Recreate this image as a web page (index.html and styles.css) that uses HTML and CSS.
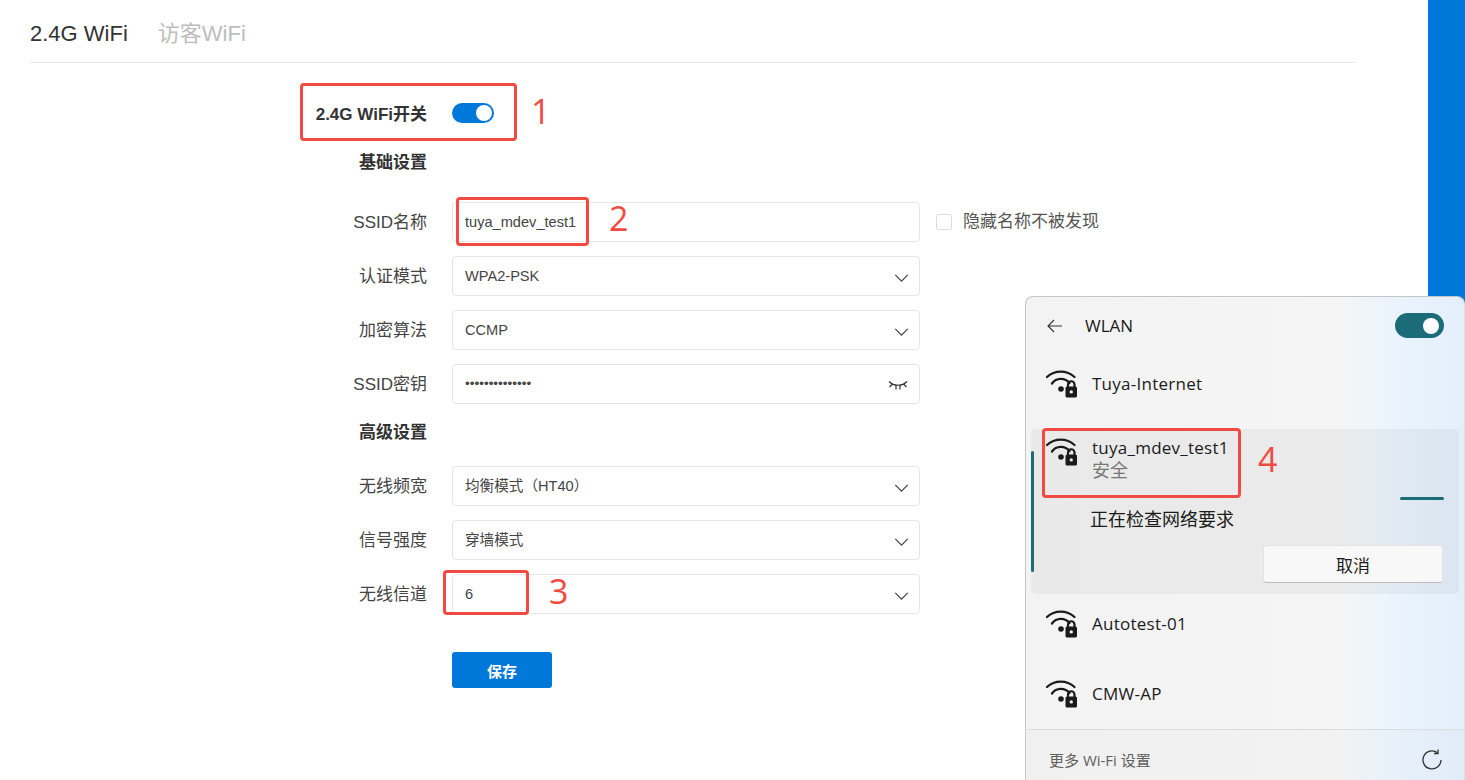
FILE: index.html
```html
<!DOCTYPE html>
<html lang="zh-CN">
<head>
<meta charset="utf-8">
<title>2.4G WiFi</title>
<link rel="stylesheet" href="styles.css">
</head>
<body>
<svg class="defs" width="0" height="0" aria-hidden="true">
  <symbol id="wifi" viewBox="0 0 34 30">
    <path d="M2 8A20.500 20.500 0 0 1 29.500 8" fill="none" stroke="#1a1a1a" stroke-width="2.300" stroke-linecap="round"/>
    <path d="M7 14.500A11 11 0 0 1 24.500 14" fill="none" stroke="#1a1a1a" stroke-width="2.300" stroke-linecap="round"/>
    <circle cx="16" cy="20" r="2.800" fill="#1a1a1a"/>
    <path d="M23 18v-2.500a3.250 3.250 0 0 1 6.500 0V18" fill="none" stroke="#1a1a1a" stroke-width="2.200"/>
    <path fill-rule="evenodd" d="M22 17.500h8.500a1.500 1.500 0 0 1 1.500 1.500v8a1.500 1.500 0 0 1-1.500 1.500H22a1.500 1.500 0 0 1-1.500-1.500V19a1.500 1.500 0 0 1 1.500-1.500zM26.250 21.200a1.700 1.700 0 1 0 0 3.400a1.700 1.700 0 0 0 0-3.400z" fill="#1a1a1a"/>
  </symbol>
  <symbol id="chev" viewBox="0 0 16 9">
    <path d="M1 1l7 7 7-7" fill="none" stroke="#444" stroke-width="1.400"/>
  </symbol>
</svg>

<main class="page">
  <header class="tabs">
    <span class="tab tab-active">2.4G WiFi</span>
    <span class="tab">访客WiFi</span>
  </header>
  <section class="form">
    <div class="row">
      <span class="label label-strong label-switch">2.4G WiFi开关</span>
      <span class="switch"><i class="knob"></i></span>
    </div>
    <div class="row row-head row-head-first"><span class="label label-strong">基础设置</span></div>
    <div class="row">
      <span class="label">SSID名称</span>
      <div class="field">tuya_mdev_test1</div>
      <span class="check"></span>
      <span class="check-text">隐藏名称不被发现</span>
    </div>
    <div class="row">
      <span class="label">认证模式</span>
      <div class="field">WPA2-PSK<svg class="chev"><use href="#chev"/></svg></div>
    </div>
    <div class="row">
      <span class="label">加密算法</span>
      <div class="field">CCMP<svg class="chev"><use href="#chev"/></svg></div>
    </div>
    <div class="row">
      <span class="label">SSID密钥</span>
      <div class="field field-pass">••••••••••••••
        <svg class="eye" viewBox="0 0 20 10"><path d="M1 1.500c5 5 13 5 18 0M4.500 4L1.500 7M8 5.500V9.500M12 5.500V9.500M15.500 4L18.500 7" fill="none" stroke="#333" stroke-width="1.200"/></svg>
      </div>
    </div>
    <div class="row row-head row-head-second"><span class="label label-strong">高级设置</span></div>
    <div class="row">
      <span class="label">无线频宽</span>
      <div class="field">均衡模式（HT40）<svg class="chev"><use href="#chev"/></svg></div>
    </div>
    <div class="row">
      <span class="label">信号强度</span>
      <div class="field">穿墙模式<svg class="chev"><use href="#chev"/></svg></div>
    </div>
    <div class="row">
      <span class="label">无线信道</span>
      <div class="field">6<svg class="chev"><use href="#chev"/></svg></div>
    </div>
    <div class="row row-actions">
      <span class="label"></span>
      <button class="save" type="button">保存</button>
    </div>
  </section>
</main>
<aside class="edge"></aside>

<div class="note box1"></div>
<div class="note box2"></div>
<div class="note box3"></div>
<div class="note box4"></div>
<span class="num num1">1</span>
<span class="num num2">2</span>
<span class="num num3">3</span>
<span class="num num4">4</span>

<section class="panel">
  <div class="panel-head">
    <svg class="back" viewBox="0 0 16 14"><path d="M15 7H1.500M7 1L1 7l6 6" fill="none" stroke="#333" stroke-width="1.100"/></svg>
    <span class="panel-title">WLAN</span>
    <span class="win-switch"><i class="win-knob"></i></span>
  </div>
  <div class="net net-first">
    <svg class="wifi"><use href="#wifi"/></svg><span class="net-name">Tuya-Internet</span>
  </div>
  <div class="net-open">
    <i class="scroll"></i>
    <div class="net-open-top">
      <svg class="wifi"><use href="#wifi"/></svg>
      <div class="net-text">
        <div class="net-name">tuya_mdev_test1</div>
        <div class="net-sub">安全</div>
      </div>
    </div>
    <i class="progress"></i>
    <div class="net-status">正在检查网络要求</div>
    <button class="cancel" type="button">取消</button>
  </div>
  <div class="net net-third">
    <svg class="wifi"><use href="#wifi"/></svg><span class="net-name">Autotest-01</span>
  </div>
  <div class="net net-fourth">
    <svg class="wifi"><use href="#wifi"/></svg><span class="net-name">CMW-AP</span>
  </div>
  <div class="panel-foot">
    <span class="more">更多 Wi-Fi 设置</span>
    <svg class="refresh" viewBox="0 0 22 22"><path d="M16.500 3.800A9 9 0 1 0 20 11" fill="none" stroke="#333" stroke-width="1.300"/><path d="M17 0.500V4.500H13" fill="none" stroke="#333" stroke-width="1.300"/></svg>
  </div>
</section>
</body>
</html>
```
FILE: styles.css
```css
html, body { margin: 0; height: 100%; }
body {
  display: flex;
  height: 780px;
  overflow: hidden;
  background: #fff;
  font-family: "Liberation Sans", "Noto Sans CJK SC", sans-serif;
  color: #333;
}
.defs { position: absolute; }
.page { width: 1325px; padding: 0 73px 0 30px; flex: none; }
.edge { flex: 1; background: #0078d9; }

.tabs {
  display: flex;
  gap: 30px;
  height: 62px;
  align-items: center;
  padding-top: 5px;
  box-sizing: border-box;
  box-shadow: 0 1px 0 #e6e6e6;
}
.tab { font-size: 22px; color: #bdbdbd; line-height: 1; }
.tab-active { color: #333; }

.form { display: flex; flex-direction: column; gap: 14px; padding-top: 31px; }
.row { display: flex; align-items: center; height: 40px; }
.row-head { height: 30px; }
.row-head-first { margin-bottom: 11px; }
.row-head-second { margin-top: -1px; margin-bottom: 5px; }
.row-actions { margin-top: 24px; height: 36px; }
.label {
  width: 397px;
  margin-right: 25px;
  margin-bottom: 4px;
  flex: none;
  text-align: right;
  font-size: 17px;
  color: #444;
}
.label-strong { font-weight: 700; color: #333; }
.label-switch { margin-bottom: 2px; }

.switch {
  width: 42px;
  height: 20px;
  border-radius: 10px;
  background: #0078d9;
  display: flex;
  align-items: center;
  justify-content: flex-end;
  padding-right: 2px;
  box-sizing: border-box;
}
.knob { width: 16px; height: 16px; border-radius: 50%; background: #fff; }

.field {
  position: relative;
  width: 468px;
  height: 40px;
  flex: none;
  box-sizing: border-box;
  border: 1px solid #e6e6e6;
  border-radius: 4px;
  padding: 0 12px;
  line-height: 38px;
  font-size: 14.600px;
  color: #444;
}
.field-pass { font-size: 13.500px; }
.chev { position: absolute; right: 10px; top: 17px; width: 15px; height: 8px; }
.eye { position: absolute; right: 11px; top: 15px; width: 20px; height: 10px; }

.check {
  width: 16px;
  height: 16px;
  margin-left: 16px;
  box-sizing: border-box;
  border: 1px solid #dcdcdc;
  border-radius: 2px;
  flex: none;
}
.check-text { margin: 0 0 6px 11px; font-size: 17px; color: #555; white-space: nowrap; }

.save {
  width: 100px;
  height: 36px;
  border: 0;
  border-radius: 3px;
  background: #0078d9;
  color: #fff;
  font: 700 15px "Liberation Sans", "Noto Sans CJK SC", sans-serif;
}

.note {
  position: absolute;
  z-index: 3;
  box-sizing: border-box;
  border: 3px solid #f04b42;
  border-radius: 4px;
}
.box1 { left: 300px; top: 83px; width: 217px; height: 58px; }
.box2 { left: 456px; top: 197px; width: 133px; height: 49px; }
.box3 { left: 443px; top: 570px; width: 86px; height: 45px; }
.box4 { left: 1042px; top: 428px; width: 199px; height: 70px; }
.num {
  position: absolute;
  z-index: 3;
  font: 34px/40px "Open Sans", sans-serif;
  color: #f04b42;
}
.num1 { left: 531px; top: 91px; }
.num2 { left: 609px; top: 198px; }
.num3 { left: 549px; top: 571px; }
.num4 { left: 1258px; top: 439px; }

.panel {
  position: absolute;
  z-index: 2;
  left: 1025px;
  top: 296px;
  width: 440px;
  height: 484px;
  box-sizing: border-box;
  padding-left: 1px;
  border: 1px solid #c6c6c6;
  border-bottom: 0;
  border-right-color: #d5e0ea;
  border-top-right-radius: 8px;
  border-top-left-radius: 8px;
  overflow: hidden;
  display: flex;
  flex-direction: column;
  background: linear-gradient(90deg, #f3f3f3 0, #f5f5f5 72%, #ebf4fd 83%, #e3effb 100%);
  font-family: "Open Sans", "Noto Sans CJK SC", sans-serif;
  color: #1b1b1b;
}
.panel-head {
  display: flex;
  align-items: center;
  height: 57px;
  flex: none;
  padding: 0 20px 0 20px;
}
.back { width: 16px; height: 14px; }
.panel-title { margin-left: 22px; font-size: 17px; flex: 1; }
.win-switch {
  width: 49px;
  height: 25px;
  border-radius: 13px;
  background: #1c6b78;
  display: flex;
  align-items: center;
  justify-content: flex-end;
  padding-right: 5px;
  box-sizing: border-box;
}
.win-knob { width: 16px; height: 16px; border-radius: 50%; background: #fff; }

.net { display: flex; align-items: center; padding-left: 18px; flex: none; box-sizing: border-box; }
.net-first { height: 75px; padding-bottom: 16px; }
.net-third { height: 70px; padding-bottom: 10px; }
.net-fourth { height: 65px; padding-bottom: 5px; }
.wifi { width: 34px; height: 30px; flex: none; }
.net-name { margin-left: 13px; font-size: 17px; line-height: 22px; letter-spacing: .25px; }

.net-open {
  position: relative;
  height: 165px;
  margin: 0 5px 0 4px;
  flex: none;
  box-sizing: border-box;
  padding-top: 8px;
  border-radius: 5px;
  background: rgba(0, 0, 0, .04);
}
.net-open .wifi { margin-left: 14px; }
.net-open-top { display: flex; height: 50px; }
.net-sub { margin-left: 13px; font-size: 18px; line-height: 22px; color: #777; }
.scroll {
  position: absolute;
  left: 0;
  top: 22px;
  width: 3px;
  height: 121px;
  border-radius: 2px;
  background: #1c6b78;
}
.progress {
  display: block;
  width: 44px;
  height: 3px;
  margin: 10px 0 0 369px;
  border-radius: 2px;
  background: #1c6b78;
}
.net-status { margin: 7px 0 0 59px; font-size: 18px; line-height: 24px; }
.cancel {
  display: block;
  width: 180px;
  height: 38px;
  margin: 14px 0 0 232px;
  border: 1px solid #e2e2e2;
  border-bottom-color: #bdbdbd;
  border-radius: 4px;
  background: #f8f8f8;
  font: 17px "Noto Sans CJK SC", sans-serif;
  color: #1b1b1b;
}
.panel-foot {
  display: flex;
  align-items: center;
  justify-content: space-between;
  height: 60px;
  flex: none;
  padding: 0 21px 0 22px;
  box-sizing: border-box;
  border-top: 1px solid #dcdcdc;
  background: rgba(0, 0, 0, .012);
}
.more { font-size: 15px; color: #5f5f5f; }
.refresh { width: 22px; height: 22px; }
```
